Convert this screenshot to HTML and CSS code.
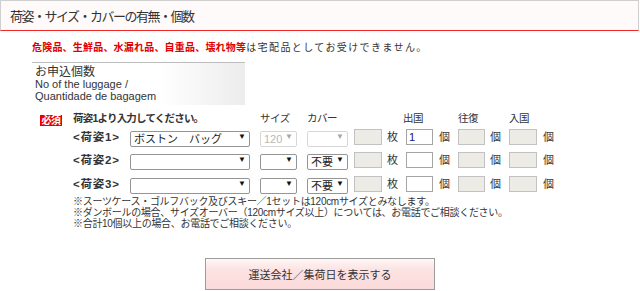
FILE: index.html
```
<!DOCTYPE html>
<html lang="ja">
<head>
<meta charset="utf-8">
<title>荷姿・サイズ・カバーの有無・個数</title>
<link rel="stylesheet" href="styles.css">
</head>
<body>
<div class="head"><h1>荷姿・サイズ・カバーの有無・個数</h1></div>
<p class="notice"><span class="red">危険品、生鮮品、水漏れ品、自重品、壊れ物等</span><span class="rest">は宅配品としてお受けできません。</span></p>
<div class="label"><span class="jp">お申込個数</span><br>No of the luggage /<br>Quantidade de bagagem</div>
<div class="form">
  <span class="badge">必須</span>
  <div class="body">
    <div class="grid">
      <div class="hd lead">荷姿1より入力してください。</div>
      <div class="hd">サイズ</div>
      <div class="hd">カバー</div>
      <div class="hd"></div>
      <div class="hd"></div>
      <div class="hd shift">出国</div>
      <div class="hd"></div>
      <div class="hd">往復</div>
      <div class="hd"></div>
      <div class="hd">入国</div>
      <div class="hd"></div>

      <div class="name">&lt;荷姿1&gt;</div>
      <span class="sel w120"><select><option>ボストン　バッグ</option></select></span>
      <span class="sel w37 dis"><select disabled><option>120</option></select></span>
      <span class="sel w41 dis"><select disabled><option></option></select></span>
      <input class="box gray w28" type="text" disabled>
      <span class="unit">枚</span>
      <input class="box w27" type="text" value="1">
      <span class="unit">個</span>
      <input class="box gray w27" type="text" disabled>
      <span class="unit">個</span>
      <input class="box gray w28" type="text" disabled>
      <span class="unit">個</span>

      <div class="name">&lt;荷姿2&gt;</div>
      <span class="sel w120"><select><option></option></select></span>
      <span class="sel w37"><select><option></option></select></span>
      <span class="sel w41"><select><option>不要</option></select></span>
      <input class="box gray w28" type="text" disabled>
      <span class="unit">枚</span>
      <input class="box w27" type="text">
      <span class="unit">個</span>
      <input class="box gray w27" type="text" disabled>
      <span class="unit">個</span>
      <input class="box gray w28" type="text" disabled>
      <span class="unit">個</span>

      <div class="name">&lt;荷姿3&gt;</div>
      <span class="sel w120"><select><option></option></select></span>
      <span class="sel w37"><select><option></option></select></span>
      <span class="sel w41"><select><option>不要</option></select></span>
      <input class="box gray w28" type="text" disabled>
      <span class="unit">枚</span>
      <input class="box w27" type="text">
      <span class="unit">個</span>
      <input class="box gray w27" type="text" disabled>
      <span class="unit">個</span>
      <input class="box gray w28" type="text" disabled>
      <span class="unit">個</span>
    </div>
    <div class="notes">
      <div>※スーツケース・ゴルフバック及びスキー／1セットは120cmサイズとみなします。</div>
      <div>※ダンボールの場合、サイズオーバー（120cmサイズ以上）については、お電話でご相談ください。</div>
      <div>※合計10個以上の場合、お電話でご相談ください。</div>
    </div>
  </div>
</div>
<div class="btnrow"><button class="btn" type="button">運送会社／集荷日を表示する</button></div>
</body>
</html>
```
FILE: styles.css
```
* { box-sizing: border-box; }
html, body { margin: 0; padding: 0; }
body {
  width: 640px;
  height: 291px;
  overflow: hidden;
  background: #fff;
  color: #333;
  font-family: "Liberation Sans", "Noto Sans CJK JP", sans-serif;
}
.head {
  width: 639px;
  height: 31px;
  border: 1px solid #cfcfcf;
  border-bottom: 1px solid #f02828;
  background: #fffafa;
  padding-left: 9px;
  display: flex;
  align-items: center;
}
.head h1 {
  margin: 0;
  font-size: 13px;
  font-weight: normal;
  letter-spacing: -1.5px;
  color: #333;
}
.notice {
  margin: 11px 0 0 32px;
  font-size: 10px;
  line-height: 12px;
  letter-spacing: 0.2px;
  color: #333;
}
.red { color: #e00000; font-weight: bold; }
.rest { letter-spacing: 1.4px; }
.label {
  margin: 8px 0 0 32px;
  width: 213px;
  border-top: 1px solid #bdbdbd;
  padding: 3px;
  background: linear-gradient(to right, #fff 60%, #ececec);
  font-size: 11px;
  line-height: 12px;
  color: #333;
}
.label .jp { font-size: 12px; }
.form {
  display: flex;
  margin-top: 7px;
  padding-left: 40px;
}
.badge {
  width: 22px;
  height: 11px;
  margin-top: 3px;
  margin-right: 11px;
  background: #e80000;
  color: #fff;
  font-size: 10px;
  font-weight: bold;
  line-height: 11px;
  letter-spacing: -0.5px;
  text-align: center;
  flex: none;
}
.grid {
  display: grid;
  grid-template-columns: 57px 130px 47px 47px 33px 19px 33px 19px 32px 19px 34px 20px;
  grid-template-rows: 17px 23px 24px 16px;
  align-items: start;
}
.hd {
  font-size: 10.5px;
  line-height: 12px;
  letter-spacing: -0.5px;
  color: #333;
}
.hd.lead {
  grid-column: 1 / 3;
  font-weight: bold;
  letter-spacing: -0.8px;
}
.hd.shift { margin-left: -3px; }
.name {
  font-size: 11.5px;
  font-weight: bold;
  line-height: 16px;
  letter-spacing: 0.8px;
  color: #333;
  white-space: nowrap;
}
.sel {
  position: relative;
  display: block;
  height: 16px;
}
.sel select {
  -webkit-appearance: none;
  appearance: none;
  width: 100%;
  height: 16px;
  margin: 0;
  padding: 0 0 0 3px;
  border: 1px solid #959595;
  border-radius: 2px;
  background: #fff;
  color: #222;
  font-family: "Liberation Sans", "Noto Sans CJK JP", sans-serif;
  font-size: 11px;
  line-height: 14px;
}
.sel::after {
  content: "▼";
  position: absolute;
  right: 4px;
  top: 0;
  font-size: 8px;
  line-height: 16px;
  color: #111;
  pointer-events: none;
}
.sel.dis select {
  border-color: #c6c6c6;
  color: #9a9a9a;
  background: #fff;
}
.sel.dis::after { color: #a8a8a8; }
.w120 { width: 120px; }
.w37 { width: 37px; }
.w41 { width: 41px; }
.w28 { width: 28px; }
.w27 { width: 27px; }
.box {
  height: 16px;
  margin: 0;
  padding: 0 2px;
  border: 1px solid #a5a5a5;
  background: #fff;
  color: #14146e;
  font-family: "Liberation Sans", "Noto Sans CJK JP", sans-serif;
  font-size: 11px;
}
.box.gray {
  background: #ecebe5;
  border-color: #c2c2c2;
}
.unit {
  font-size: 11px;
  line-height: 16px;
  color: #333;
}
.notes {
  margin-top: 4px;
  font-size: 10px;
  line-height: 11px;
  letter-spacing: -0.3px;
  color: #333;
  white-space: nowrap;
}
.btnrow {
  display: flex;
  justify-content: center;
  margin-top: 29px;
}
.btn {
  width: 230px;
  height: 32px;
  margin: 0;
  border: 1px solid #9c9c9c;
  background: linear-gradient(#fff6f6 0%, #fde3e3 35%, #fbd9d9 100%);
  color: #333;
  font-family: "Liberation Sans", "Noto Sans CJK JP", sans-serif;
  font-size: 11px;
}
```
